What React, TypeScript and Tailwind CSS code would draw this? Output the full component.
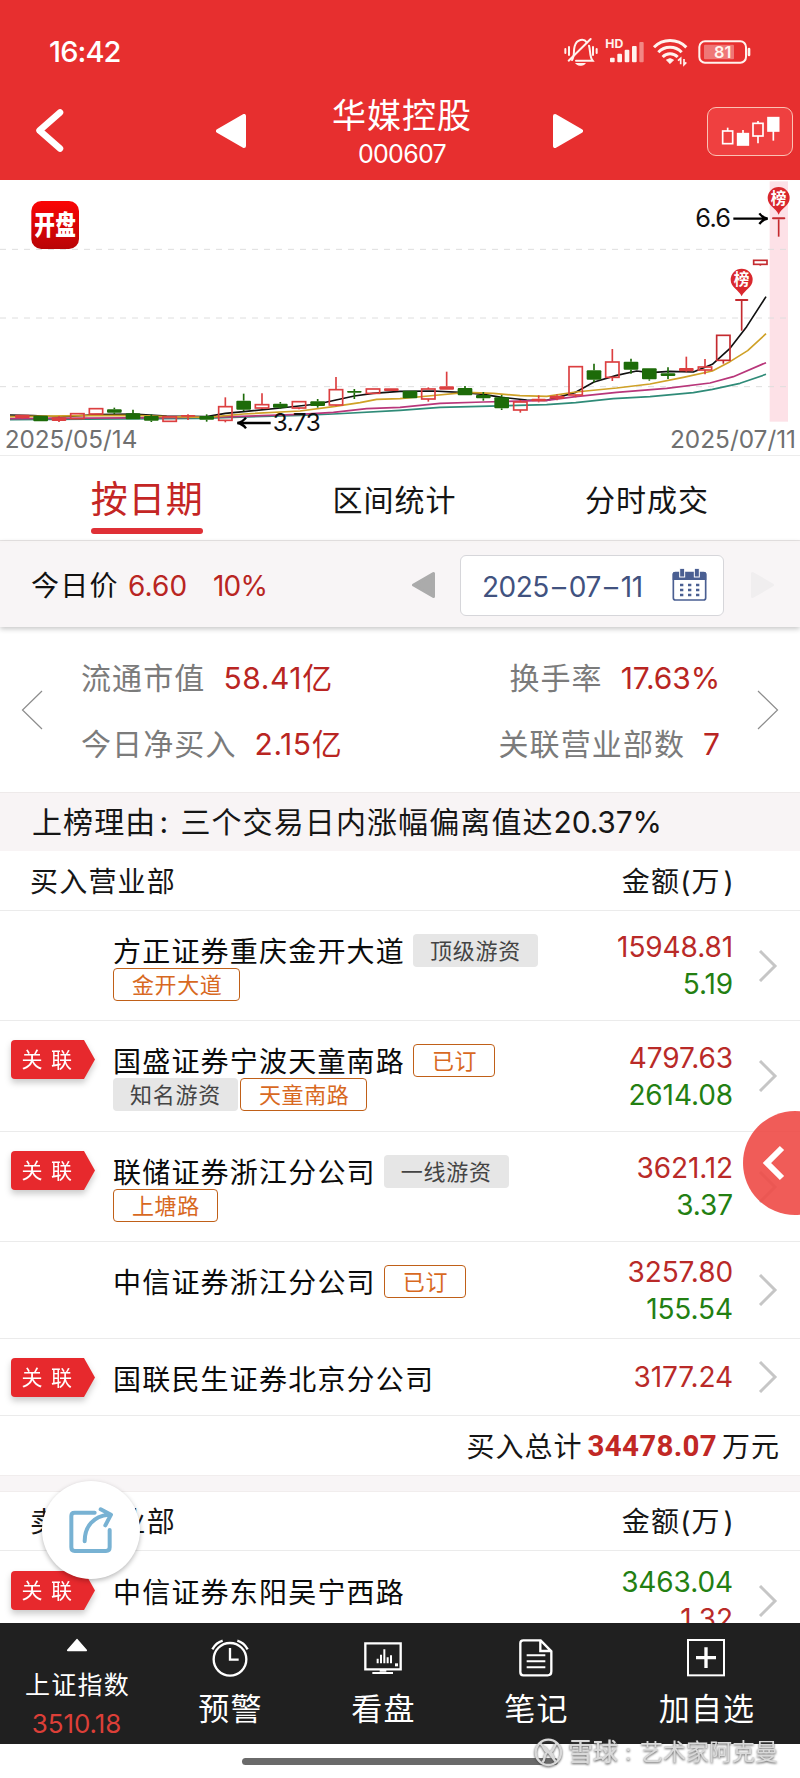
import React from "react";

type Tag = { text: string; kind: "gray" | "orange" };
type Seat = {
  name: string;
  linked?: boolean;
  inline?: Tag;
  below?: Tag[];
  top: string;
  bottom?: string;
  height: string;
  selling?: boolean;
};

const buyers: Seat[] = [
  { name: "方正证券重庆金开大道", inline: { text: "顶级游资", kind: "gray" }, below: [{ text: "金开大道", kind: "orange" }], top: "15948.81", bottom: "5.19", height: "h-[110px]" },
  { name: "国盛证券宁波天童南路", linked: true, inline: { text: "已订", kind: "orange" }, below: [{ text: "知名游资", kind: "gray" }, { text: "天童南路", kind: "orange" }], top: "4797.63", bottom: "2614.08", height: "h-[111px]" },
  { name: "联储证券浙江分公司", linked: true, inline: { text: "一线游资", kind: "gray" }, below: [{ text: "上塘路", kind: "orange" }], top: "3621.12", bottom: "3.37", height: "h-[110px]" },
  { name: "中信证券浙江分公司", inline: { text: "已订", kind: "orange" }, top: "3257.80", bottom: "155.54", height: "h-[97px]" },
  { name: "国联民生证券北京分公司", linked: true, top: "3177.24", height: "h-[77px]" },
];

const seller: Seat = { name: "中信证券东阳吴宁西路", linked: true, top: "3463.04", bottom: "1.32", height: "h-[98px]", selling: true };

type Candle = [number, number, number, number, number, "h" | "r" | "g"];
// centre x, body top, body bottom, wick top, wick bottom, hollow / red / green
const candles: Candle[] = [
  [67, 704, 714, 704, 716, "r"], [122, 707, 724, 707, 724, "g"], [177, 712, 723, 708, 726, "r"], [232, 701, 716, 701, 716, "h"],
  [288, 686, 702, 686, 702, "h"], [343, 688, 698, 683, 702, "g"], [399, 700, 718, 689, 718, "g"], [454, 708, 722, 703, 726, "g"],
  [509, 710, 724, 710, 724, "h"], [564, 705, 710, 703, 720, "r"], [620, 708, 719, 703, 725, "g"], [676, 680, 721, 652, 727, "h"],
  [731, 662, 689, 641, 693, "g"], [786, 674, 684, 640, 687, "h"], [841, 671, 683, 666, 687, "g"], [897, 665, 684, 665, 688, "h"],
  [953, 664, 678, 657, 683, "g"], [1008, 629, 675, 591, 679, "h"], [1063, 633, 638, 627, 657, "g"], [1119, 627, 640, 627, 640, "h"],
  [1174, 625, 633, 625, 633, "r"], [1230, 632, 655, 632, 655, "g"], [1285, 627, 657, 622, 665, "h"], [1340, 619, 629, 575, 629, "r"],
  [1395, 624, 646, 618, 646, "g"], [1450, 645, 655, 636, 662, "g"], [1505, 652, 685, 645, 690, "g"], [1561, 666, 690, 660, 698, "h"],
  [1616, 656, 664, 646, 667, "r"], [1671, 647, 656, 643, 661, "r"], [1727, 560, 645, 560, 652, "h"], [1782, 571, 599, 551, 607, "g"],
  [1837, 546, 592, 507, 603, "h"], [1893, 545, 569, 536, 581, "g"], [1948, 565, 598, 565, 602, "g"], [2004, 580, 588, 562, 597, "g"],
  [2059, 564, 574, 530, 577, "r"], [2115, 561, 570, 537, 583, "h"], [2170, 466, 541, 466, 551, "h"], [2225, 357, 363, 357, 452, "r"],
  [2281, 241, 253, 241, 257, "h"], [2336, 112, 118, 112, 170, "r"],
];

function ListPin({ x, y }: { x: number; y: number }) {
  return (
    <g transform={`translate(${x} ${y})`}>
      <path d="M0 50C-8 30 -33 24 -33 0A33 33 0 1 1 33 0C33 24 8 30 0 50Z" fill="#d9282e" />
      <text x="0" y="17" textAnchor="middle" fontSize="47" fontWeight="700" fill="#fff">榜</text>
    </g>
  );
}

function Chart() {
  return (
    <svg className="block h-[275px] w-full" viewBox="0 0 2400 825">
      <rect x="2309" y="4" width="55" height="721" fill="#fde1e7" />
      {[208, 414, 620].map((y) => (
        <line key={y} x1="0" x2="2376" y1={y} y2={y} stroke="#dedede" strokeWidth="3" strokeDasharray="18 18" />
      ))}
      <g fill="none" strokeWidth="5" strokeLinejoin="round">
        <polyline stroke="#111" points="30,705 100,707 180,711 290,704 400,702 500,708 620,710 676,700 731,695 841,684 953,672 1008,660 1063,648 1119,640 1200,634 1300,633 1395,638 1450,643 1505,652 1580,660 1640,661 1727,637 1782,606 1850,586 1910,573 1950,578 2010,574 2080,576 2137,553 2190,505 2240,440 2298,350" />
        <polyline stroke="#2f8b78" points="30,719 600,715 900,706 1000,702 1200,691 1320,682 1640,674 1727,668 1840,656 1950,650 2080,638 2137,628 2220,610 2298,583" />
        <polyline stroke="#b8367a" points="30,716 500,713 700,710 900,703 1000,697 1100,686 1200,682 1320,670 1450,666 1640,661 1727,650 1850,637 2000,625 2130,609 2200,590 2298,548" />
        <polyline stroke="#cfa127" points="30,710 250,707 400,706 500,710 620,712 731,702 900,693 1000,680 1080,668 1130,658 1200,656 1285,648 1400,637 1480,640 1560,647 1640,649 1727,636 1850,624 1950,612 2050,592 2137,573 2190,545 2243,512 2298,461" />
      </g>
      {candles.map(([x, t, b, wt, wb, k]) => {
        const c = k === "g" ? "#1d6b09" : x > 2150 ? "#c42a2f" : "#dc3f40";
        const tee = b - t === 6;
        return (
          <g key={x} stroke={c} strokeWidth="5">
            {wt < t && <line x1={x} x2={x} y1={wt} y2={t} />}
            {wb > b && <line x1={x} x2={x} y1={b} y2={wb} />}
            {k === "h" ? (
              <rect x={x - 20} y={t} width="40" height={b - t} fill="none" strokeWidth="5" />
            ) : (
              <rect x={x - (tee ? 20 : 22)} y={t} width={tee ? 40 : 44} height={b - t} rx="3" fill={c} stroke="none" />
            )}
          </g>
        );
      })}
      <g fill="none" stroke="#000" strokeWidth="7">
        <path d="M812 729H716M738 713C732 721 724 727 712 729C724 731 732 737 738 745" />
        <path d="M2200 116H2298M2278 100C2284 108 2292 114 2303 116C2292 118 2284 124 2278 132" />
      </g>
      <text x="818" y="753" fontSize="73" textLength="144" fill="#111">3.73</text>
      <text x="2086" y="140" fontSize="76" textLength="107" fill="#111">6.6</text>
      <text x="14" y="803" fontSize="73" textLength="398" lengthAdjust="spacingAndGlyphs" fill="#707070">2025/05/14</text>
      <text x="2010" y="803" fontSize="73" textLength="378" lengthAdjust="spacingAndGlyphs" fill="#707070">2025/07/11</text>
      <ListPin x={2336} y={54} />
      <ListPin x={2225} y={299} />
      <defs>
        <linearGradient id="logo" x1="0" y1="0" x2="0" y2="1">
          <stop offset="0" stopColor="#fb0505" />
          <stop offset="1" stopColor="#b80406" />
        </linearGradient>
      </defs>
      <rect x="94" y="63" width="143" height="144" rx="30" fill="url(#logo)" />
      <g transform="translate(0 136) scale(1 1.3)" fontSize="62" fontWeight="900" fill="#fff">
        <text x="103" y="23">开</text>
        <text x="166" y="23">盘</text>
      </g>
    </svg>
  );
}

function StatusIcons() {
  return (
    <svg className="h-[32px] w-[190px]" viewBox="0 0 570 96" fill="none" stroke="#fff3ee">
      <g strokeWidth="6" strokeLinecap="round">
        <path d="M4 36V48M15 30V54M87 30V54M98 36V48" strokeWidth="6" />
        <path d="M24 69C32 60 28 42 32 28C38 6 60 4 68 16M75 26C80 42 76 58 86 71H36" />
        <path d="M14 71L80 6" />
        <path d="M38 80C44 86 58 86 62 80Z" fill="#fff3ee" strokeWidth="4" />
      </g>
      <text x="124" y="33" fontSize="34" fontWeight="700" textLength="54" lengthAdjust="spacingAndGlyphs" fill="#fff3ee" stroke="none">HD</text>
      <g fill="#fff3ee" stroke="none">
        <rect x="138" y="62" width="14" height="14" rx="3" />
        <rect x="160" y="50" width="14" height="26" rx="3" />
        <rect x="182" y="38" width="14" height="38" rx="3" />
        <rect x="204" y="27" width="14" height="49" rx="3" />
        <rect x="226" y="15" width="13" height="61" rx="3" opacity=".45" />
      </g>
      <g strokeWidth="9">
        <path d="M270 31C296 4 340 4 367 31" />
        <path d="M283 46C302 26 334 26 353 46" />
        <path d="M296 60C308 47 328 47 341 60" />
        <path d="M307 69Q318 60 329 69L318 80Z" fill="#fff3ee" strokeWidth="2" />
        <path d="M350 82V64L342 71M360 66V83L367 76" strokeWidth="5" />
      </g>
      <rect x="406" y="13" width="140" height="64" rx="17" strokeWidth="6" />
      <rect x="420" y="23" width="90" height="44" rx="3" fill="#fff" fillOpacity=".35" stroke="none" />
      <path d="M555 36V54" strokeWidth="8" strokeLinecap="round" />
      <text x="450" y="62" fontSize="48" fontWeight="600" textLength="52" lengthAdjust="spacingAndGlyphs" fill="#fff3ee" stroke="none">81</text>
    </svg>
  );
}

function TriangleLeft({ className }: { className: string }) {
  return (
    <svg className={className} viewBox="0 0 30 34">
      <path d="M2 17L28 2V32Z" fill="currentColor" stroke="currentColor" strokeWidth="4" strokeLinejoin="round" />
    </svg>
  );
}

function Chevron() {
  return (
    <svg className="h-[32px] w-[20px]" viewBox="0 0 20 32">
      <path d="M2 1L17 16L2 31" fill="none" stroke="#c6c6c6" strokeWidth="3" />
    </svg>
  );
}

function TagChip({ tag }: { tag: Tag }) {
  return tag.kind === "gray" ? (
    <span className="flex h-[33px] w-[125px] shrink-0 items-center justify-center rounded bg-[#e6e6e6] pt-[2px] text-[22px] tracking-[0.8px] text-[#444]">{tag.text}</span>
  ) : (
    <span className="flex h-[33px] shrink-0 items-center justify-center rounded border border-[#c06018] pl-[18px] pr-[17px] pt-[2px] text-[22px] tracking-[0.6px] text-[#d8691f]">{tag.text}</span>
  );
}

function SeatRow({ seat }: { seat: Seat }) {
  return (
    <div className={`${seat.height} flex shrink-0 border-b border-[#ebebeb]`}>
      <div className="w-[113px] shrink-0 pl-[10.5px] pt-[19px]">
        {seat.linked && (
          <div className="h-[39px] w-[84.500px] drop-shadow-[0_4px_3px_rgba(0,0,0,0.2)]">
            <div className="flex h-full w-full items-center rounded-l-[4px] bg-[#e7292d] pl-[11px] pt-[1px] text-[21px] tracking-[8.5px] text-white [clip-path:polygon(0_0,87%_0,100%_50%,87%_100%,0_100%)]">关联</div>
          </div>
        )}
      </div>
      <div className="grow pt-[22px]">
        <div className="flex h-[34px] items-center">
          <span className="mr-[8px] whitespace-nowrap pt-[4px] text-[28px] leading-[34px] tracking-[1.2px] text-[#0b0b0b]">{seat.name}</span>
          {seat.inline && <TagChip tag={seat.inline} />}
        </div>
        <div className="flex gap-[2px] pt-[1px]">
          {seat.below?.map((t) => <TagChip key={t.text} tag={t} />)}
        </div>
      </div>
      <div className="flex w-[160px] shrink-0 flex-col items-end justify-center pt-[1px] text-[28px] leading-[37px] tracking-[-0.1px]">
        <span className={seat.selling ? "text-[#237f12]" : "text-[#b92a28]"}>{seat.top}</span>
        {seat.bottom && <span className={seat.selling ? "text-[#b92a28]" : "text-[#237f12]"}>{seat.bottom}</span>}
      </div>
      <div className="flex w-[67px] shrink-0 items-center pl-[25px]"><Chevron /></div>
    </div>
  );
}

function ListHeader({ title, height }: { title: string; height: string }) {
  return (
    <div className={`${height} flex shrink-0 items-center justify-between border-b border-[#ebebeb] pl-[30px] pr-[65px] pt-[2px] text-[28px] tracking-[1.2px] text-[#161616]`}>
      <span>{title}</span>
      <span>金额<span className="tracking-[1px]">(</span>万<span className="pl-[3px]">)</span></span>
    </div>
  );
}

function ThinChevron({ flip }: { flip?: boolean }) {
  return (
    <svg className={flip ? "h-[40px] w-[22px] rotate-180" : "h-[40px] w-[22px]"} viewBox="0 0 22 40">
      <path d="M21 1L1.500 20L21 39" fill="none" stroke="#8c8c8c" strokeWidth="1.2" />
    </svg>
  );
}

function Stat({ label, value, unit }: { label: string; value: string; unit?: string }) {
  return (
    <div className="flex h-[66px] items-center">
      <span className="text-[30px] tracking-[1.1px] text-[#7b7b7b]">{label}</span>
      <span className={unit ? "pl-[18px] text-[30px] tracking-[0.6px] text-[#b92522]" : "pl-[18px] text-[30px] tracking-[-0.1px] text-[#b92522]"}>{value}{unit}</span>
    </div>
  );
}

function NavItem({ label, width, children }: { label: string; width: string; children: React.ReactNode }) {
  return (
    <div className={`${width} flex flex-col items-center pt-[13px] text-white`}>
      <svg className="h-[42px] w-[44px]" viewBox="0 0 132 126" fill="none" stroke="#fff" strokeWidth="7">{children}</svg>
      <span className="pl-[2px] pt-[7px] text-[31px] leading-[48px] tracking-[1.2px]">{label}</span>
    </div>
  );
}

export default function App() {
  return (
    <div className="relative flex h-[1778px] w-[800px] flex-col overflow-hidden bg-white font-['Inter','Noto_Sans_CJK_SC',sans-serif]">
      <header className="flex h-[180px] shrink-0 flex-col bg-[#e72f2f] text-white">
        <div className="flex h-[88px] items-end justify-between pl-[49px] pr-[46px]">
          <span className="pb-[14px] text-[29px] font-medium leading-[44px] tracking-[-0.9px]">16:42</span>
          <div className="pb-[19px]"><StatusIcons /></div>
        </div>
        <div className="flex h-[86px] items-center pl-[34px] pr-[7px]">
          <svg className="h-[46px] w-[32px]" viewBox="0 0 32 46"><path d="M26 4.500L5.500 22.500L26 40.500" fill="none" stroke="#fff" strokeWidth="6.500" strokeLinecap="round" strokeLinejoin="round" /></svg>
          <TriangleLeft className="ml-[150px] h-[34px] w-[30px]" />
          <div className="ml-[55px] flex w-[202px] flex-col items-center pt-[2px]">
            <span className="text-[34px] leading-[44px] tracking-[1px]">华媒控股</span>
            <span className="text-[25px] leading-[32px] tracking-[-0.7px]">000607</span>
          </div>
          <TriangleLeft className="ml-[50px] h-[34px] w-[30px] rotate-180" />
          <div className="ml-auto flex h-[49px] w-[86px] items-center justify-center rounded-[9px] border border-[#fbc2b4] bg-[#ef4040]">
            <svg className="h-[30px] w-[60px]" viewBox="0 0 180 90" fill="none" stroke="#fff" strokeWidth="5">
              <rect x="8" y="45" width="30" height="38" /><path d="M23 35V45" />
              <rect x="53" y="53" width="32" height="34" fill="#fff" /><path d="M69 42V53" />
              <rect x="99" y="22" width="30" height="38" /><path d="M114 15V22M114 60V82" />
              <rect x="144" y="5" width="32" height="40" fill="#fff" /><path d="M160 45V74" />
            </svg>
          </div>
        </div>
      </header>

      <section className="h-[276px] shrink-0 border-b border-[#ececec]"><Chart /></section>

      <nav className="flex h-[85px] shrink-0 border-b border-[#e9e6e6] text-[30px] tracking-[1px] text-[#151515]">
        <div className="flex w-[294px] flex-col items-center text-[37px] tracking-[0.5px] text-[#c42624]">
          <span className="pt-[16px] leading-[56px]">按日期</span>
          <span className="h-[6px] w-[112px] rounded-full bg-[#df3036]" />
        </div>
        <div className="flex w-[201px] items-center justify-center pt-[4px]">区间统计</div>
        <div className="flex w-[304px] items-center justify-center pt-[4px]">分时成交</div>
      </nav>

      <section className="z-10 flex h-[86px] shrink-0 items-center border-t-2 border-[#f7f4f4] bg-[#f8f5f6] pl-[31px] shadow-[0_2px_5px_rgba(0,0,0,0.22)]">
        <span className="w-[97px] pt-[2px] text-[28px] tracking-[1.3px] text-[#111]">今日价</span>
        <span className="w-[85px] pt-[2px] text-[28px] tracking-[0.1px] text-[#b92522]">6.60</span>
        <span className="w-[199px] pt-[2px] text-[28px] tracking-[-0.8px] text-[#b92522]">10%</span>
        <TriangleLeft className="h-[28px] w-[23px] text-[#ababab]" />
        <div className="ml-[25px] flex h-[61px] w-[264px] items-center justify-between rounded-[6px] border border-[#d6d6da] bg-white pl-[21px] pr-[16px] text-[#41527f]">
          <span className="whitespace-nowrap pt-[3px] text-[28px] tracking-[-0.5px]">2025<span className="inline-block w-[20px] text-center">–</span>07<span className="inline-block w-[20px] text-center">–</span>11</span>
          <svg className="h-[34px] w-[35px]" viewBox="0 0 105 102">
            <rect x="4" y="14" width="97" height="82" rx="6" fill="#fff" stroke="#4a5f92" strokeWidth="5" />
            <path d="M2 36V18Q2 12 8 12H97Q103 12 103 18V36Z" fill="#4a5f92" />
            <rect x="23" y="1" width="15" height="26" fill="#4a5f92" stroke="#fff" strokeWidth="3" />
            <rect x="67" y="1" width="15" height="26" fill="#4a5f92" stroke="#fff" strokeWidth="3" />
            <path d="M24 51H34M48 51H58M72 51H82M24 66H34M48 66H58M72 66H82M24 81H34M48 81H58M72 81H82" stroke="#4a5f92" strokeWidth="8" />
          </svg>
        </div>
        <TriangleLeft className="ml-[27px] h-[28px] w-[23px] rotate-180 text-[#f0eeef]" />
      </section>

      <section className="flex h-[166px] shrink-0 items-center border-b border-[#eeeaea] pl-[21px] pr-[21px]">
        <ThinChevron />
        <div className="flex grow justify-between pl-[38px] pr-[37px] pt-[3px]">
          <div>
            <Stat label="流通市值" value="58.41" unit="亿" />
            <Stat label="今日净买入" value="2.15" unit="亿" />
          </div>
          <div className="flex flex-col items-end">
            <Stat label="换手率" value="17.63%" />
            <Stat label="关联营业部数" value="7" />
          </div>
        </div>
        <ThinChevron flip />
      </section>

      <div className="flex h-[58px] shrink-0 items-center bg-[#f8f4f5] pl-[32px] pt-[1px] text-[30px] tracking-[1.1px] text-[#161616]">
        上榜理由<span className="w-[24px] pl-[3px]">:</span>三个交易日内涨幅偏离值达<span className="tracking-[-0.2px]">20.37%</span>
      </div>

      <ListHeader title="买入营业部" height="h-[60px]" />
      {buyers.map((s) => <SeatRow key={s.name} seat={s} />)}
      <div className="flex h-[59px] shrink-0 items-center justify-end pr-[20px] pt-[2px] text-[28px] tracking-[1px] text-[#161616]">
        买入总计<span className="px-[5px] font-['Roboto'] text-[29.5px] font-bold tracking-[0.3px] text-[#c12825]">34478.07</span>万元
      </div>
      <div className="h-[17px] shrink-0 border-y border-[#f1eded] bg-[#f8f5f6]" />
      <ListHeader title="卖出营业部" height="h-[59px]" />
      <div className="flex h-[72px] shrink-0 flex-col overflow-hidden pt-[1px]"><SeatRow seat={seller} /></div>

      <footer className="flex h-[121px] shrink-0 bg-[#202020]">
        <div className="flex w-[153px] flex-col items-center pt-[15px] text-white">
          <svg className="h-[16px] w-[24px]" viewBox="0 0 24 16"><path d="M12 2L22.500 14H1.500Z" fill="#fff" stroke="#fff" strokeWidth="2" strokeLinejoin="round" /></svg>
          <span className="pl-[2px] pt-[15px] text-[25px] leading-[36px] tracking-[1.2px]">上证指数</span>
          <span className="text-[26px] leading-[41px] tracking-[-0.1px] text-[#dc3f38]">3510.18</span>
        </div>
        <NavItem label="预警" width="w-[153px]">
          <circle cx="66" cy="70" r="49" />
          <path d="M66 36V71H92M13 40Q24 20 44 14M119 40Q108 20 88 14" />
        </NavItem>
        <NavItem label="看盘" width="w-[153px]">
          <path d="M13 22H119V100H13Z" strokeWidth="7" />
          <path d="M34 111H96M56 104H76M50 68V82M60 56V82M70 40V82M80 64V82M90 58V82" strokeWidth="6" />
          <rect x="102" y="82" width="9" height="9" fill="#fff" stroke="none" />
        </NavItem>
        <NavItem label="笔记" width="w-[153px]">
          <path d="M28 13H80L112 46V106Q112 118 101 118H28Q19 118 19 108V22Q19 13 28 13ZM79 14V45H110" />
          <path d="M38 58H94M38 76H94M38 94H94" strokeWidth="6" />
        </NavItem>
        <NavItem label="加自选" width="w-[188px]">
          <rect x="12" y="12" width="108" height="106" strokeWidth="6" />
          <path d="M66 34V96M36 65H96" strokeWidth="10" />
        </NavItem>
      </footer>

      <div className="flex h-[34px] shrink-0 items-center justify-center">
        <div className="h-[7px] w-[316px] rounded-full bg-[#6a6a6a]" />
      </div>

      <div className="absolute left-[743px] top-[1111px] z-20 flex h-[104px] w-[104px] items-center rounded-full bg-[#ee4a46]/90 pl-[19px]">
        <svg className="h-[36px] w-[24px]" viewBox="0 0 24 36"><path d="M20 3L5 18L20 33" fill="none" stroke="#fff" strokeWidth="6" /></svg>
      </div>

      <div className="absolute left-[42px] top-[1481px] z-20 flex size-[98px] items-center justify-center rounded-full bg-white shadow-[0_2px_5px_rgba(0,0,0,0.28)]">
        <svg className="h-[48px] w-[46px]" viewBox="0 0 138 144" fill="none" stroke="#78b2d3" strokeWidth="12" strokeLinecap="round" strokeLinejoin="round">
          <path d="M80 20H20Q10 20 10 30V124Q10 135 20 135H114Q125 135 125 124V72" />
          <path d="M50 106C50 62 76 30 122 26M98 10L129 26L112 58" />
        </svg>
      </div>

      <div className="absolute left-[533px] top-[1735px] z-20 flex items-center text-[#d9d9d9] drop-shadow-[0_1px_1px_rgba(70,70,70,0.9)]">
        <svg className="size-[31px]" viewBox="0 0 93 93" fill="none" stroke="currentColor" strokeWidth="7">
          <circle cx="46" cy="46" r="38" />
          <path d="M22 20C36 30 30 38 42 46C30 56 40 64 28 76M70 20C60 30 66 36 52 46C66 54 56 64 68 74M34 28L62 66" />
        </svg>
        <span className="pl-[4px] text-[25px] font-medium leading-[34px]">雪球</span>
        <span className="w-[22px] pl-[7px] text-[23px] leading-[34px]">:</span>
        <span className="text-[23px] leading-[34px]">艺术家阿克曼</span>
      </div>
    </div>
  );
}
